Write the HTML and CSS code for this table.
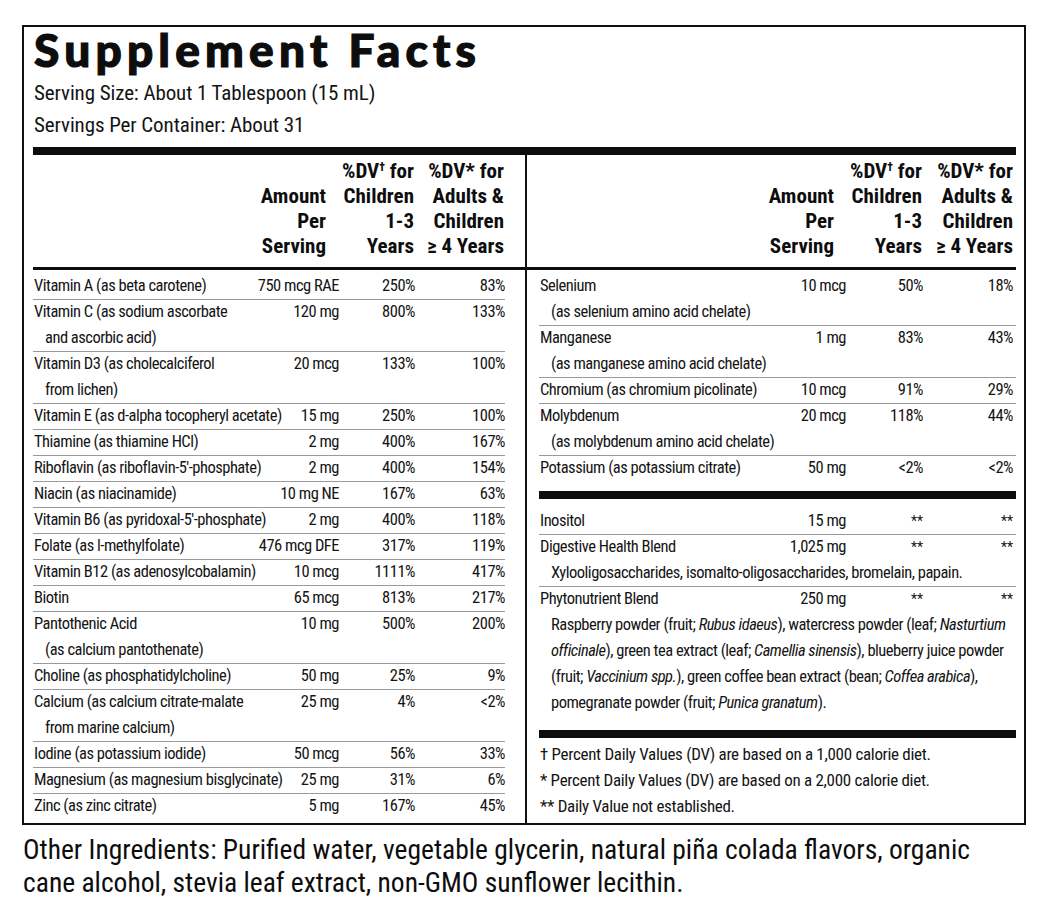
FILE: index.html
```html
<!DOCTYPE html>
<html lang="en">
<head>
<meta charset="utf-8">
<title>Supplement Facts</title>
<link rel="stylesheet" href="styles.css">
</head>
<body>
<div class="panel">
  <h1 class="title">Supplement Facts</h1>
  <p class="serving">Serving Size: About 1 Tablespoon (15 mL)</p>
  <p class="serving">Servings Per Container: About 31</p>
  <div class="bar bar-top"></div>
  <div class="columns">
    <section class="col col-left">
      <div class="thead">
        <div class="th th-name"></div>
        <div class="th th-amt">Amount<br>Per<br>Serving</div>
        <div class="th th-kid">%DV<sup>†</sup> for<br>Children<br>1-3<br>Years</div>
        <div class="th th-adult">%DV* for<br>Adults &amp;<br>Children<br>≥ 4 Years</div>
      </div>
      <div class="rows">
        <div class="row"><div class="name">Vitamin A (as beta carotene)</div><div class="v">750 mcg RAE</div><div class="v">250%</div><div class="v">83%</div></div>
        <div class="row"><div class="name">Vitamin C (as sodium ascorbate<span class="cont">and ascorbic acid)</span></div><div class="v">120 mg</div><div class="v">800%</div><div class="v">133%</div></div>
        <div class="row"><div class="name">Vitamin D3 (as cholecalciferol<span class="cont">from lichen)</span></div><div class="v">20 mcg</div><div class="v">133%</div><div class="v">100%</div></div>
        <div class="row"><div class="name">Vitamin E (as d-alpha tocopheryl acetate)</div><div class="v">15 mg</div><div class="v">250%</div><div class="v">100%</div></div>
        <div class="row"><div class="name">Thiamine (as thiamine HCl)</div><div class="v">2 mg</div><div class="v">400%</div><div class="v">167%</div></div>
        <div class="row"><div class="name">Riboflavin (as riboflavin-5′-phosphate)</div><div class="v">2 mg</div><div class="v">400%</div><div class="v">154%</div></div>
        <div class="row"><div class="name">Niacin (as niacinamide)</div><div class="v">10 mg NE</div><div class="v">167%</div><div class="v">63%</div></div>
        <div class="row"><div class="name">Vitamin B6 (as pyridoxal-5′-phosphate)</div><div class="v">2 mg</div><div class="v">400%</div><div class="v">118%</div></div>
        <div class="row"><div class="name">Folate (as l-methylfolate)</div><div class="v">476 mcg DFE</div><div class="v">317%</div><div class="v">119%</div></div>
        <div class="row"><div class="name">Vitamin B12 (as adenosylcobalamin)</div><div class="v">10 mcg</div><div class="v">1111%</div><div class="v">417%</div></div>
        <div class="row"><div class="name">Biotin</div><div class="v">65 mcg</div><div class="v">813%</div><div class="v">217%</div></div>
        <div class="row"><div class="name">Pantothenic Acid<span class="cont">(as calcium pantothenate)</span></div><div class="v">10 mg</div><div class="v">500%</div><div class="v">200%</div></div>
        <div class="row"><div class="name">Choline (as phosphatidylcholine)</div><div class="v">50 mg</div><div class="v">25%</div><div class="v">9%</div></div>
        <div class="row"><div class="name">Calcium (as calcium citrate-malate<span class="cont">from marine calcium)</span></div><div class="v">25 mg</div><div class="v">4%</div><div class="v">&lt;2%</div></div>
        <div class="row"><div class="name">Iodine (as potassium iodide)</div><div class="v">50 mcg</div><div class="v">56%</div><div class="v">33%</div></div>
        <div class="row"><div class="name">Magnesium (as magnesium bisglycinate)</div><div class="v">25 mg</div><div class="v">31%</div><div class="v">6%</div></div>
        <div class="row row-last"><div class="name">Zinc (as zinc citrate)</div><div class="v">5 mg</div><div class="v">167%</div><div class="v">45%</div></div>
      </div>
    </section>
    <section class="col col-right">
      <div class="thead">
        <div class="th th-name"></div>
        <div class="th th-amt">Amount<br>Per<br>Serving</div>
        <div class="th th-kid">%DV<sup>†</sup> for<br>Children<br>1-3<br>Years</div>
        <div class="th th-adult">%DV* for<br>Adults &amp;<br>Children<br>≥ 4 Years</div>
      </div>
      <div class="rows">
        <div class="row"><div class="name">Selenium<span class="cont">(as selenium amino acid chelate)</span></div><div class="v">10 mcg</div><div class="v">50%</div><div class="v">18%</div></div>
        <div class="row"><div class="name">Manganese<span class="cont">(as manganese amino acid chelate)</span></div><div class="v">1 mg</div><div class="v">83%</div><div class="v">43%</div></div>
        <div class="row"><div class="name">Chromium (as chromium picolinate)</div><div class="v">10 mcg</div><div class="v">91%</div><div class="v">29%</div></div>
        <div class="row"><div class="name">Molybdenum<span class="cont">(as molybdenum amino acid chelate)</span></div><div class="v">20 mcg</div><div class="v">118%</div><div class="v">44%</div></div>
        <div class="row row-last"><div class="name">Potassium (as potassium citrate)</div><div class="v">50 mg</div><div class="v">&lt;2%</div><div class="v">&lt;2%</div></div>
        <div class="bar bar-mid"></div>
        <div class="row"><div class="name">Inositol</div><div class="v">15 mg</div><div class="v star">**</div><div class="v star">**</div></div>
        <div class="row"><div class="name">Digestive Health Blend<span class="cont">Xylooligosaccharides, isomalto-oligosaccharides, bromelain, papain.</span></div><div class="v">1,025 mg</div><div class="v star">**</div><div class="v star">**</div></div>
        <div class="row row-last"><div class="name">Phytonutrient Blend<span class="cont">Raspberry powder (fruit; <i>Rubus idaeus</i>), watercress powder (leaf; <i>Nasturtium</i></span><span class="cont"><i>officinale</i>), green tea extract (leaf; <i>Camellia sinensis</i>), blueberry juice powder</span><span class="cont">(fruit; <i>Vaccinium spp.</i>), green coffee bean extract (bean; <i>Coffea arabica</i>),</span><span class="cont">pomegranate powder (fruit; <i>Punica granatum</i>).</span></div><div class="v">250 mg</div><div class="v star">**</div><div class="v star">**</div></div>
        <div class="bar bar-low"></div>
        <div class="notes">
          <p class="note">† Percent Daily Values (DV) are based on a 1,000 calorie diet.</p>
          <p class="note">* Percent Daily Values (DV) are based on a 2,000 calorie diet.</p>
          <p class="note">** Daily Value not established.</p>
        </div>
      </div>
    </section>
  </div>
</div>
<p class="other">Other Ingredients: Purified water, vegetable glycerin, natural piña colada flavors, organic<br>cane alcohol, stevia leaf extract, non-GMO sunflower lecithin.</p>
</body>
</html>
```

FILE: styles.css
```css
html, body {
  margin: 0;
  padding: 0;
  background: #ffffff;
  color: #141414;
}

body {
  font-family: "Roboto Condensed", "Noto Sans", sans-serif;
  font-stretch: condensed;
}

.panel {
  box-sizing: border-box;
  width: 1004px;
  height: 800px;
  margin: 25px 0 0 22px;
  border: 2px solid #111111;
  padding: 0 8px 0 9px;
  display: flex;
  flex-direction: column;
}

.title {
  margin: 0 0 4px 1px;
  font-family: "Lato", "Liberation Sans", sans-serif;
  font-stretch: normal;
  font-weight: 900;
  font-size: 46px;
  line-height: 46px;
  letter-spacing: 5.2px;
  color: #0d0d0d;
  -webkit-text-stroke: 1.2px #0d0d0d;
}

.serving {
  margin: 0 0 0 1px;
  font-size: 21px;
  line-height: 32px;
  letter-spacing: -0.1px;
}

.bar {
  background: #0d0d0d;
  height: 8px;
}

.bar-top {
  margin-top: 6px;
}

.columns {
  flex: 1;
  display: grid;
  grid-template-columns: 492px 1fr;
  min-height: 0;
}

.col-right {
  border-left: 2px solid #111111;
}

.thead {
  box-sizing: border-box;
  height: 115px;
  border-bottom: 3px solid #0d0d0d;
  display: grid;
  align-items: end;
  padding-bottom: 8px;
  font-weight: 700;
  font-size: 21px;
  line-height: 25px;
  text-align: right;
  white-space: nowrap;
  color: #0d0d0d;
}

.col-left .thead {
  grid-template-columns: minmax(0, 1fr) 90px 76px 90px;
  padding-right: 20px;
}

.col-right .thead {
  grid-template-columns: minmax(0, 1fr) 90px 77px 93px;
  padding-left: 12px;
}

.th sup {
  font-size: 12px;
  line-height: 0;
  vertical-align: 7px;
}

.th-amt {
  padding-right: 13px;
}

.th-kid {
  padding-right: 1px;
}

.col-left .th-adult {
  padding-right: 1px;
}

.col-right .th-amt {
  padding-right: 12px;
}

.col-right .th-adult {
  padding-right: 3px;
}

.rows {
  padding-top: 3px;
  font-size: 16.5px;
  line-height: 26px;
  letter-spacing: -0.5px;
}

.col-left .rows {
  padding-right: 20px;
}

.col-right .rows {
  padding-left: 12px;
}

.row {
  display: grid;
  border-bottom: 1px solid #9a9a9a;
  margin-bottom: -1px;
  white-space: nowrap;
}

.col-left .row {
  grid-template-columns: minmax(0, 1fr) 90px 76px 90px;
}

.col-right .row {
  grid-template-columns: minmax(0, 1fr) 90px 77px 93px;
}

.row-last {
  border-bottom: 0;
  margin-bottom: 0;
}

.name {
  padding-left: 1px;
}

.cont {
  display: block;
  padding-left: 11px;
}

.v {
  text-align: right;
}

.col-right .v:last-child {
  padding-right: 3px;
}

.star {
  font-size: 14px;
  letter-spacing: 0;
}

.bar-mid {
  margin: 10px 0 9px;
}

.bar-low {
  margin: 14px 0 3px;
}

.note {
  margin: 0;
  padding-left: 1px;
  font-size: 17px;
  letter-spacing: -0.3px;
}

.other {
  margin: 9px 0 0;
  padding-left: 23px;
  font-size: 27.5px;
  line-height: 32.5px;
  color: #0d0d0d;
  white-space: nowrap;
}
```
